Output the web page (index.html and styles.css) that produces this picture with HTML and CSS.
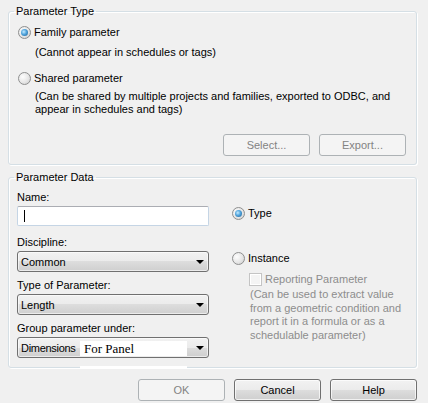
FILE: index.html
```html
<!DOCTYPE html>
<html>
<head>
<meta charset="utf-8">
<title>Parameter Properties</title>
<link rel="stylesheet" href="styles.css">
</head>
<body>
<div class="dialog">
  <fieldset class="group group-type">
    <legend>Parameter Type</legend>
    <div class="radio-row r-family"><span class="radio checked"></span><span>Family parameter</span></div>
    <div class="note n-family">(Cannot appear in schedules or tags)</div>
    <div class="radio-row r-shared"><span class="radio"></span><span>Shared parameter</span></div>
    <div class="note n-shared">(Can be shared by multiple projects and families, exported to ODBC, and<br>appear in schedules and tags)</div>
    <div class="btn-row type-btns">
      <button class="btn disabled">Select...</button>
      <button class="btn disabled">Export...</button>
    </div>
  </fieldset>

  <fieldset class="group group-data">
    <legend>Parameter Data</legend>
    <div class="data-grid">
      <div class="left-col">
        <div class="field-label l-name">Name:</div>
        <div class="textbox"><span class="caret"></span></div>
        <div class="field-label l-disc">Discipline:</div>
        <div class="combo"><span class="combo-text">Common</span><span class="combo-arrow"></span></div>
        <div class="field-label l-type">Type of Parameter:</div>
        <div class="combo"><span class="combo-text">Length</span><span class="combo-arrow"></span></div>
        <div class="field-label l-group">Group parameter under:</div>
        <div class="combo combo-group">
          <span class="combo-text tight">Dimensions</span><span class="combo-arrow"></span>
          <span class="overlay-label">For Panel</span>
          <span class="overlay-strip"></span>
        </div>
      </div>
      <div class="right-col">
        <div class="radio-row r-typeopt"><span class="radio checked"></span><span>Type</span></div>
        <div class="radio-row r-instance"><span class="radio"></span><span>Instance</span></div>
        <div class="check-row"><span class="checkbox"></span><span class="muted">Reporting Parameter</span></div>
        <div class="muted desc">(Can be used to extract value<br>from a geometric condition and<br>report it in a formula or as a<br>schedulable parameter)</div>
      </div>
    </div>
  </fieldset>

  <div class="btn-row dialog-btns">
    <button class="btn disabled">OK</button>
    <button class="btn">Cancel</button>
    <button class="btn">Help</button>
  </div>
</div>
</body>
</html>
```

FILE: styles.css
```css
html, body {
  margin: 0;
  padding: 0;
}

body {
  width: 428px;
  height: 403px;
  overflow: hidden;
  background: #f0f0f0;
  color: #000;
  font-family: "Liberation Sans", Arial, sans-serif;
  font-size: 11px;
  line-height: 16px;
  white-space: nowrap;
}

.dialog {
  padding: 3px 11px 0 8px;
}

.group {
  margin: 0;
  min-width: 0;
  border: 1px solid #d5dfe5;
  border-radius: 3px;
  box-shadow: inset 1px 1px 0 #fff, 1px 1px 0 #fff;
}

.group legend {
  padding: 0 2px;
  line-height: 16px;
  height: 16px;
}

.group-type {
  padding: 0 10px 8px 9px;
}

.group-type legend {
  margin-left: -4px;
}

.group-data {
  margin-top: 4px;
  padding: 2px 10px 9px 8px;
}

.group-data legend {
  margin-left: -3px;
}

/* radio buttons */
.radio-row {
  display: flex;
  align-items: center;
  gap: 3px;
  height: 16px;
}

.radio {
  width: 13px;
  height: 13px;
  box-sizing: border-box;
  border-radius: 50%;
  border: 1px solid #8e8f8f;
  background: radial-gradient(circle at 35% 35%, #fdfdfd 0%, #e6e6e6 55%, #c9c9c9 100%);
  position: relative;
  flex: none;
}

.radio.checked::after {
  content: "";
  position: absolute;
  left: 2px;
  top: 2px;
  width: 7px;
  height: 7px;
  border-radius: 50%;
  background: radial-gradient(circle at 40% 40%, #c6ecff 0%, #4fa3dc 45%, #1c5b8d 100%);
}

.r-family { margin-top: 5px; }
.r-shared { margin-top: 10px; }

.note {
  padding-left: 17px;
}

.n-family {
  margin-top: 4px;
}

.n-shared {
  margin-top: 4px;
  line-height: 13px;
}

/* buttons */
.btn-row {
  display: flex;
  justify-content: flex-end;
  gap: 9px;
}

.type-btns {
  margin-top: 18px;
}

.btn {
  width: 87px;
  height: 22px;
  box-sizing: border-box;
  padding: 0;
  font: inherit;
  color: #000;
  border: 1px solid #707070;
  border-radius: 3px;
  background: linear-gradient(#f2f2f2 0%, #ebebeb 50%, #dddddd 50%, #cfcfcf 100%);
  box-shadow: inset 0 0 0 1px rgba(255, 255, 255, 0.7);
}

.btn.disabled {
  color: #838383;
  border-color: #adb2b5;
  background: #f4f4f4;
  box-shadow: none;
}

.dialog-btns {
  margin-top: 11px;
}

/* data group */
.data-grid {
  display: grid;
  grid-template-columns: 192px 1fr;
  column-gap: 23px;
}

.field-label {
  height: 16px;
}

.l-name { margin-top: 2px; }
.l-disc { margin-top: 8px; }
.l-type { margin-top: 5px; }
.l-group { margin-top: 5px; }

.textbox {
  margin-top: 1px;
  height: 20px;
  box-sizing: border-box;
  background: #fff;
  border: 1px solid #c5d5e5;
  border-top-color: #abadb3;
  border-radius: 2px;
  display: flex;
  align-items: center;
  padding-left: 6px;
}

.caret {
  width: 1px;
  height: 12px;
  background: #000;
}

.combo {
  margin-top: 1px;
  height: 21px;
  box-sizing: border-box;
  border: 1px solid #707070;
  border-radius: 3px;
  background: linear-gradient(#f2f2f2 0%, #ebebeb 50%, #dddddd 50%, #cfcfcf 100%);
  box-shadow: inset 0 0 0 1px rgba(255, 255, 255, 0.6);
  display: flex;
  align-items: center;
  justify-content: space-between;
  padding: 0 4px 0 3px;
  position: relative;
}

.combo-text.tight {
  letter-spacing: -0.3px;
}

.combo-arrow {
  width: 0;
  height: 0;
  border-left: 4px solid transparent;
  border-right: 4px solid transparent;
  border-top: 4px solid #000;
  margin-top: 1px;
}

.overlay-label {
  position: absolute;
  left: 62px;
  top: 3px;
  width: 107px;
  height: 15px;
  background: #fff;
  font-family: "Liberation Serif", serif;
  font-size: 13px;
  line-height: 15px;
  padding-left: 4px;
  box-sizing: border-box;
}

.overlay-strip {
  position: absolute;
  left: 62px;
  top: 28px;
  width: 107px;
  height: 3px;
  background: #fff;
}

.r-typeopt { margin-top: 18px; }
.r-instance { margin-top: 29px; }

.check-row {
  margin-top: 5px;
  padding-left: 17px;
  display: flex;
  align-items: center;
  gap: 3px;
  height: 16px;
}

.checkbox {
  width: 13px;
  height: 13px;
  box-sizing: border-box;
  border: 1px solid #c4c4c4;
  background: #f4f4f4;
  box-shadow: inset 0 0 0 1px #fff;
  flex: none;
}

.muted {
  color: #8d8d8d;
}

.desc {
  margin-top: 1px;
  padding-left: 18px;
  line-height: 13.5px;
}
```
